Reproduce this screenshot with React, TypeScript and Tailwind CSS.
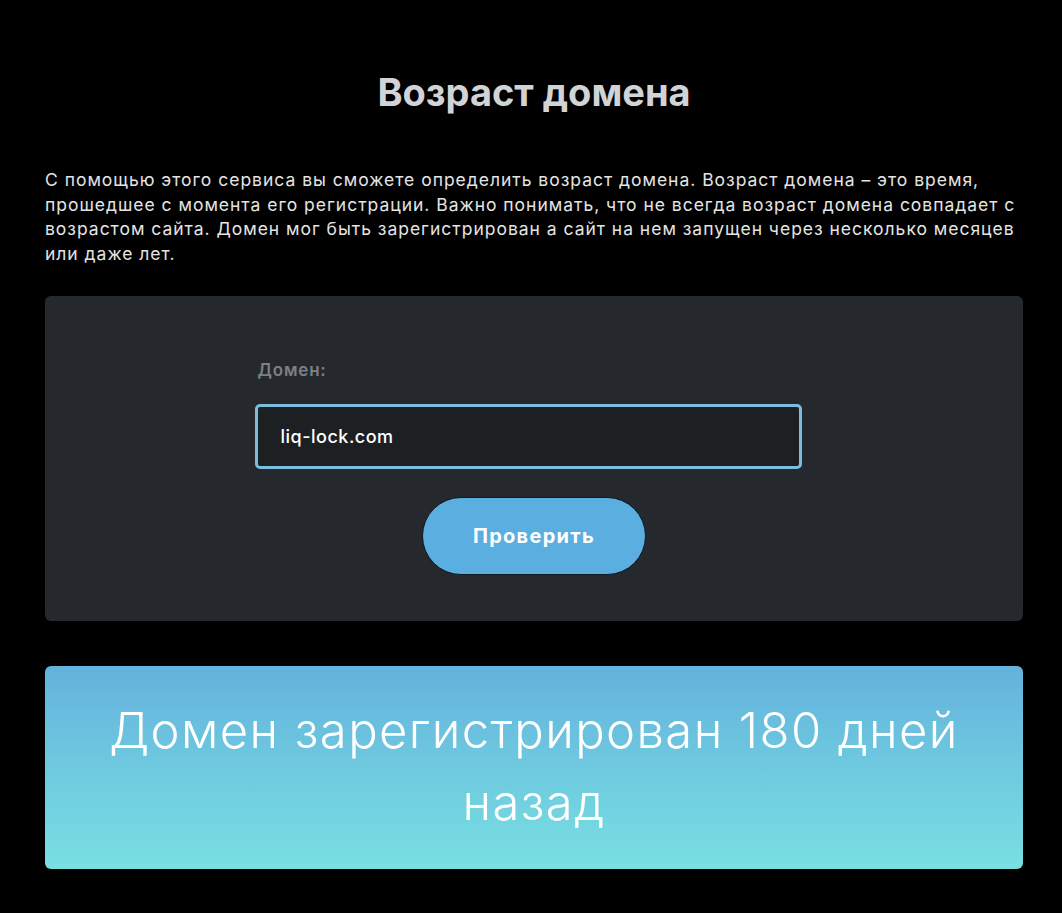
export default function App() {
  return (
    <div className="min-h-[913px] w-full bg-black font-['Inter',sans-serif]">
      <div className="ml-[45px] flex w-[978px] flex-col pb-[45px] pt-[70px]">
        <h1 className="text-center text-[38px] font-bold leading-[44px] text-[#d2d3d6]">
          Возраст домена
        </h1>

        <p className="mt-[54px] text-[17.5px] leading-[24.7px] tracking-[0.98px] text-[#e4e4e4]">
          С помощью этого сервиса вы сможете определить возраст домена. Возраст домена – это время,
          <br />
          прошедшее с момента его регистрации. Важно понимать, что не всегда возраст домена совпадает с
          <br />
          возрастом сайта. Домен мог быть зарегистрирован а сайт на нем запущен через несколько месяцев
          <br />
          или даже лет.
        </p>

        <div className="mt-[29px] flex flex-col items-center rounded-md bg-[#25282c] pb-[46px] pt-[62px]">
          <div className="mr-[12px] flex w-[547px] flex-col">
            <label className="pl-[3px] text-[17px] font-semibold leading-6 tracking-[0.8px] text-[#7b8088]">
              Домен:
            </label>
            <div className="mt-[22px] flex h-[65px] items-center rounded-[5px] border-[3px] border-[#7cbcdc] bg-[#1d2023] pl-[23px] text-[18px] font-medium tracking-[0.5px] text-white">
              liq-lock.com
            </div>
          </div>
          <button className="mt-[28px] h-[78px] w-[224px] rounded-full border border-[#0d1a24] bg-[#5aafe0] text-[20px] font-bold tracking-[1.3px] text-white">
            Проверить
          </button>
        </div>

        <div className="mt-[45px] flex h-[203px] items-center justify-center rounded-md bg-gradient-to-b from-[#64b2dd] to-[#79e0e1] px-[40px]">
          <p className="text-center text-[49px] font-light leading-[72px] tracking-[1.4px] text-white">
            Домен зарегистрирован 180 дней назад
          </p>
        </div>
      </div>
    </div>
  );
}
